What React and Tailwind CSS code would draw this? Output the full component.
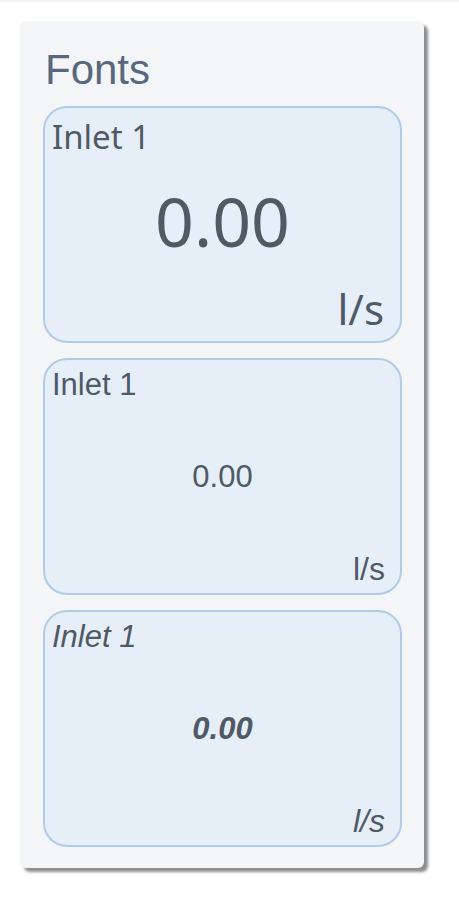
export default function App() {
    const cards = [
        {
            font: "font-['Noto_Sans',sans-serif]",
            title: 'text-[33px] pt-[12px]',
            value: 'text-[68px]',
            unit: 'text-[42px] pb-[11px] pr-[16px]',
        },
        {
            font: "font-['Liberation_Sans',Arial,sans-serif]",
            title: 'text-[31px] pt-[9px]',
            value: 'text-[31px]',
            unit: 'text-[32px] pb-[8px] pr-[15px]',
        },
        {
            font: "font-['Liberation_Sans',Arial,sans-serif] italic",
            title: 'text-[31px] pt-[9px]',
            value: 'text-[31px] font-bold',
            unit: 'text-[32px] pb-[8px] pr-[15px]',
        },
    ];

    return (
        <div className="min-h-screen bg-white">
            <div className="h-[2px] bg-[#f1f1f1]"></div>

            {/* Panel */}
            <div className="ml-[20px] mt-[19px] w-[404px] h-[847px] bg-[#f4f5f7] rounded-[6px] shadow-[4px_4px_3px_rgba(0,0,0,0.45)] pl-[23px] pr-[22px] pt-[28px]">
                <h2 className="ml-[2px] text-[42px] leading-none text-[#57687f] font-['Liberation_Sans',Arial,sans-serif]">
                    Fonts
                </h2>

                <div className="mt-[15px] flex flex-col gap-[15px]">
                    {cards.map((c, i) => (
                        <div
                            key={i}
                            className={`h-[237px] flex flex-col border-2 border-[#b2caea] bg-[#e6eef8] rounded-[24px] text-[#4f5a66] ${c.font}`}
                        >
                            <div className={`px-[7px] leading-none ${c.title}`}>Inlet 1</div>
                            <div className="flex-1 flex items-center justify-center">
                                <span className={`leading-none ${c.value}`}>0.00</span>
                            </div>
                            <div className={`text-right leading-none ${c.unit}`}>l/s</div>
                        </div>
                    ))}
                </div>
            </div>
        </div>
    );
}
